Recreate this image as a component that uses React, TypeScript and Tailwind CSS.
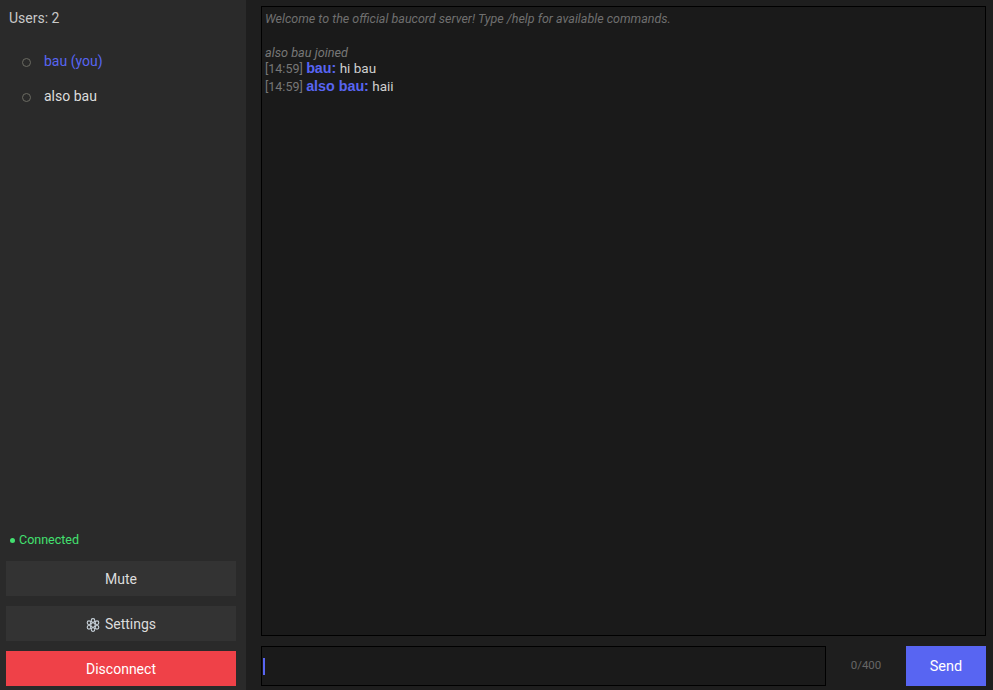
import React from 'react';

const users = [
  { name: 'bau (you)', self: true },
  { name: 'also bau', self: false },
];

const messages = [
  { time: '[14:59]', author: 'bau:', text: 'hi bau' },
  { time: '[14:59]', author: 'also bau:', text: 'haii' },
];

function GearIcon() {
  return (
    <svg viewBox="0 0 14 14" className="w-[14px] h-[14px]" fill="none" stroke="#c9d3dc" strokeWidth="1.1">
      <circle cx="7" cy="2.4" r="1.8" />
      <circle cx="7" cy="11.6" r="1.8" />
      <circle cx="3" cy="4.7" r="1.8" />
      <circle cx="11" cy="4.7" r="1.8" />
      <circle cx="3" cy="9.3" r="1.8" />
      <circle cx="11" cy="9.3" r="1.8" />
      <circle cx="7" cy="7" r="2.2" />
    </svg>
  );
}

export default function App() {
  return (
    <div className="flex h-[690px] w-[993px] overflow-hidden bg-[#1e1e1e] font-['Roboto',Arial,sans-serif] text-[14px] text-[#dcdcdc]">
      {/* Sidebar */}
      <aside className="flex w-[246px] flex-col bg-[#2a2a2a] pb-1 pl-[6px] pr-[10px]">
        <div className="pl-[3px] pt-[10px] leading-[16px] text-[#c8c8c8]">Users: 2</div>
        <ul className="mt-[18px] flex flex-col">
          {users.map((user) => (
            <li key={user.name} className="flex h-[35px] items-center pl-4">
              <span className="mt-[2px] h-[9px] w-[9px] rounded-full border border-[#6b6b62]" />
              <span className={user.self ? 'ml-[13px] text-[#5865f2]' : 'ml-[13px] text-[#dcdcdc]'}>{user.name}</span>
            </li>
          ))}
        </ul>

        <div className="mt-auto pl-[4px] text-[12.5px] leading-[14px] text-[#43e070]">
          <span className="mr-[4px] inline-block h-[5px] w-[5px] rounded-full bg-[#43e070] align-[1px]" />
          Connected
        </div>
        <div className="mt-[14px] flex flex-col gap-[10px]">
          <button className="h-[35px] bg-[#333333] pt-[2px] text-[#dcdcdc]">Mute</button>
          <button className="flex h-[35px] items-center justify-center gap-[5px] bg-[#333333] pt-[2px] text-[#dcdcdc]">
            <GearIcon />
            Settings
          </button>
          <button className="h-[35px] bg-[#ef4148] pt-[2px] text-white">Disconnect</button>
        </div>
      </aside>

      {/* Chat */}
      <main className="flex flex-1 flex-col pb-1 pl-[15px] pr-[7px] pt-[6px]">
        <div className="h-[630px] border border-black bg-[#1a1a1a] pl-[3px] pr-1 pt-[3px] text-[13.5px] leading-[17px]">
          <div className="text-[12.5px] italic text-[#6f6f6f]">Welcome to the official baucord server! Type /help for available commands.</div>
          <div className="mt-[17px] h-[16px] text-[12.7px] italic text-[#777777]">also bau joined</div>
          {messages.map((msg, i) => (
            <div key={msg.author} className={i === 0 ? 'h-[18px] text-[#cfcfcf]' : 'text-[#cfcfcf]'}>
              <span className="text-[12.5px] text-[#777777]">{msg.time}</span>{' '}
              <span className="font-['Liberation_Sans',Arial,sans-serif] text-[14.3px] font-bold text-[#5865f2]">{msg.author}</span> {msg.text}
            </div>
          ))}
        </div>
        <div className="mt-[10px] flex h-[40px] items-stretch">
          <div className="flex w-[565px] items-center border border-black bg-[#1a1a1a] pl-[1px]">
            <span className="h-[17px] w-[2px] bg-[#5865f2]" />
          </div>
          <div className="flex w-[80px] items-center justify-center text-[11.5px] text-[#666666]">0/400</div>
          <button className="w-[80px] bg-[#5865f2] pt-[2px] text-[14.5px] text-white">Send</button>
        </div>
      </main>
    </div>
  );
}
